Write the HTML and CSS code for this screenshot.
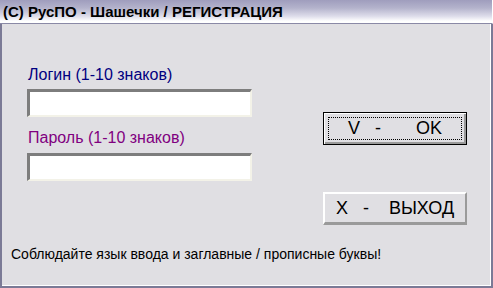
FILE: index.html
```html
<!DOCTYPE html>
<html>
<head>
<meta charset="utf-8">
<link rel="stylesheet" href="styles.css">
</head>
<body>
<div class="window">
  <div class="titlebar">(C) РусПО - Шашечки / РЕГИСТРАЦИЯ</div>
  <div class="client">
    <div class="main">
      <div class="form">
        <div class="label login">Логин (1-10 знаков)</div>
        <div class="field"></div>
        <div class="label pass">Пароль (1-10 знаков)</div>
        <div class="field"></div>
      </div>
      <div class="buttons">
        <div class="btn default"><span class="focus">V   -       OK</span></div>
        <div class="btn">X   -    ВЫХОД</div>
      </div>
    </div>
    <div class="hint">Соблюдайте язык ввода и заглавные / прописные буквы!</div>
  </div>
</div>
</body>
</html>
```

FILE: styles.css
```css
html, body {
  margin: 0;
  padding: 0;
  background: #e0dfe3;
}
.window {
  width: 493px;
  height: 288px;
  box-sizing: border-box;
  display: flex;
  flex-direction: column;
  background: #e0dfe3;
  font-family: "Liberation Sans", Arial, sans-serif;
}
.titlebar {
  height: 24px;
  box-sizing: border-box;
  padding: 3px 0 0 3px;
  font-weight: bold;
  font-size: 15px;
  line-height: 18px;
  color: #000;
  background: linear-gradient(#9f9dbd 0%, #b4b3cc 35%, #dddcea 70%, #ffffff 92%, #ffffff 100%);
  border-right: 1px solid #ffffff;
  border-bottom: 1px solid #8a89a6;
}
.client {
  flex: 1;
  display: flex;
  flex-direction: column;
  border-left: 2px solid #7b7a96;
  border-right: 2px solid #7b7a96;
  border-bottom: 2px solid #7b7a96;
  box-shadow: inset -1px 0 0 #ffffff, inset 0 -1px 0 #ffffff;
}
.main {
  display: flex;
  padding: 41px 0 0 25px;
}
.form {
  width: 225px;
  display: flex;
  flex-direction: column;
}
.label {
  font-size: 16px;
  line-height: 19px;
  height: 19px;
  padding-left: 1px;
  margin-bottom: 5px;
}
.login { color: #000080; }
.pass { color: #800080; margin-top: 11px; margin-bottom: 6px; }
.field {
  height: 28px;
  box-sizing: border-box;
  background: #fff;
  border-top: 3px solid #7d7d7d;
  border-left: 3px solid #7d7d7d;
  border-right: 2px solid #f3f2e8;
  border-bottom: 2px solid #f3f2e8;
}
.buttons {
  margin-left: 71px;
  padding-top: 47px;
  display: flex;
  flex-direction: column;
  gap: 47px;
}
.btn {
  width: 144px;
  height: 33px;
  box-sizing: border-box;
  display: flex;
  align-items: center;
  justify-content: center;
  font-size: 18px;
  white-space: pre;
  color: #000;
  background: #e0dfe3;
  border-top: 2px solid #ffffff;
  border-left: 2px solid #ffffff;
  border-right: 2px solid #9a9a9a;
  border-bottom: 3px solid #9a9a9a;
}
.btn.default {
  border: 1px solid #000;
  box-shadow: inset 1px 1px 0 #fff, inset -2px -2px 0 #9a9a9a;
  padding: 4px;
}
.focus {
  flex: 1;
  align-self: stretch;
  display: flex;
  align-items: center;
  justify-content: center;
  border: 1px dotted #000;
}
.hint {
  margin: 21px 0 0 9px;
  font-size: 14px;
  line-height: 17px;
  color: #000;
}
```
